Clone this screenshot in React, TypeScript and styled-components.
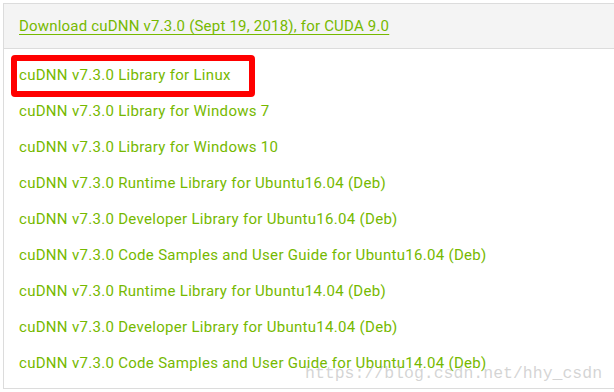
import React from 'react';
import styled, { createGlobalStyle } from 'styled-components';

const rows = [
  'cuDNN v7.3.0 Library for Linux',
  'cuDNN v7.3.0 Library for Windows 7',
  'cuDNN v7.3.0 Library for Windows 10',
  'cuDNN v7.3.0 Runtime Library for Ubuntu16.04 (Deb)',
  'cuDNN v7.3.0 Developer Library for Ubuntu16.04 (Deb)',
  'cuDNN v7.3.0 Code Samples and User Guide for Ubuntu16.04 (Deb)',
  'cuDNN v7.3.0 Runtime Library for Ubuntu14.04 (Deb)',
  'cuDNN v7.3.0 Developer Library for Ubuntu14.04 (Deb)',
  'cuDNN v7.3.0 Code Samples and User Guide for Ubuntu14.04 (Deb)',
];

const App = () => {
  return (
    <>
      <GlobalStyle />
      <Page>
        <Panel>
          <Header>
            <HeaderLink href="#">
              Download cuDNN v7.3.0 (Sept 19, 2018), for CUDA 9.0
            </HeaderLink>
          </Header>
          <List>
            {rows.map((r) => (
              <Row key={r}>
                <RowLink href="#">{r}</RowLink>
              </Row>
            ))}
          </List>
          <Highlight />
          <Watermark>https://blog.csdn.net/hhy_csdn</Watermark>
        </Panel>
      </Page>
    </>
  );
};

const GlobalStyle = createGlobalStyle`
  body {
    margin: 0;
    background: #fff;
    overflow: hidden;
  }
`;

const Page = styled.div`
  width: 614px;
  height: 392px;
  overflow: hidden;
  padding: 3px 0 0 3px;
  box-sizing: border-box;
`;

const Panel = styled.div`
  position: relative;
  width: 640px;
  border: 1px solid #dcdcdc;
  border-right: none;
  font-family: Roboto, 'Liberation Sans', sans-serif;
  font-size: 15px;
  letter-spacing: 0.3px;
`;

const Header = styled.div`
  height: 44px;
  background: #f4f4f4;
  border-bottom: 1px solid #dcdcdc;
  display: flex;
  align-items: center;
  padding-left: 15px;
`;

const HeaderLink = styled.a`
  color: #76b900;
  text-decoration: underline;
  text-underline-offset: 3px;
  letter-spacing: 0.2px;
`;

const List = styled.ul`
  list-style: none;
  margin: 0;
  padding: 8px 0 7px 15px;
`;

const Row = styled.li`
  height: 36px;
  line-height: 36px;
`;

const RowLink = styled.a`
  color: #76b900;
  text-decoration: none;
`;

const Highlight = styled.div`
  position: absolute;
  left: 7px;
  top: 51px;
  width: 244px;
  height: 42px;
  box-sizing: border-box;
  border: 6px solid #ff0000;
  border-radius: 4px;
`;

const Watermark = styled.div`
  position: absolute;
  left: 301px;
  top: 360px;
  font-family: 'Liberation Mono', monospace;
  font-size: 16.5px;
  letter-spacing: 0;
  color: rgba(170, 170, 170, 0.5);
  white-space: nowrap;
`;

export default App;
